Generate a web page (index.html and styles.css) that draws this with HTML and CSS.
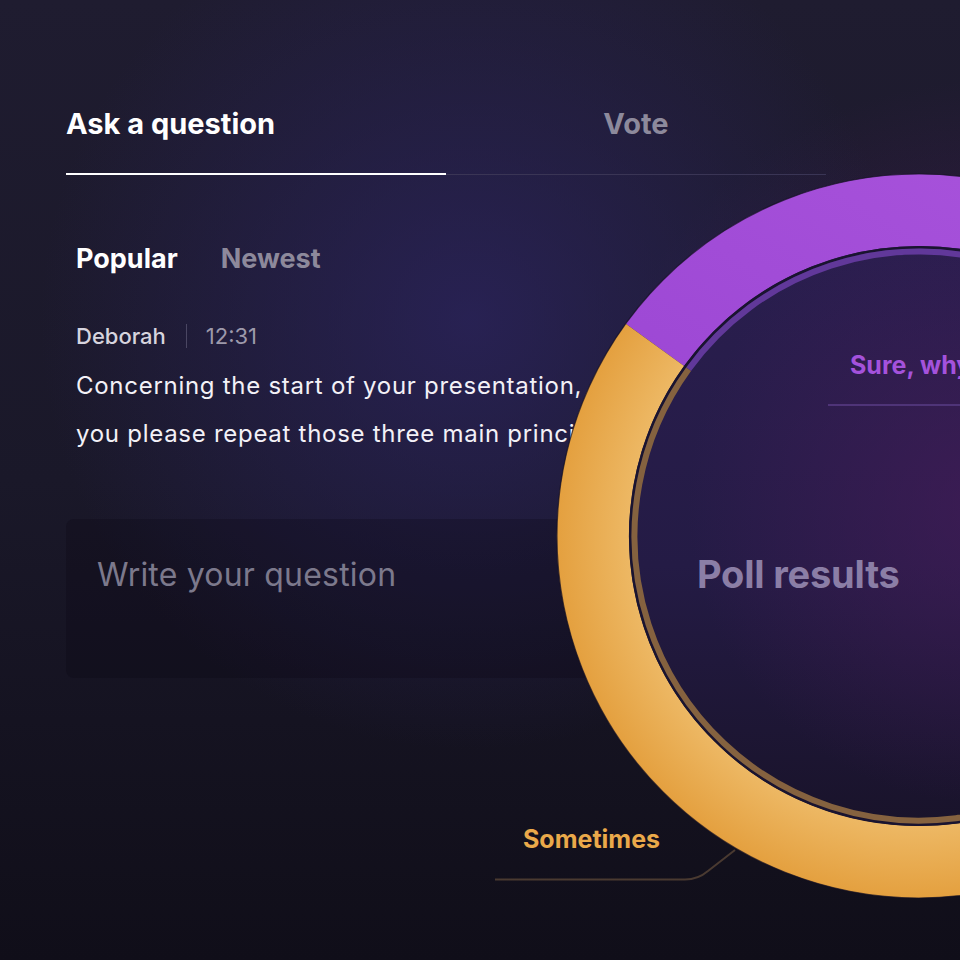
FILE: index.html
```html
<!DOCTYPE html>
<html lang="en">
<head>
  <meta charset="UTF-8" />
  <meta name="viewport" content="width=device-width, initial-scale=1.0"/>
  <title>Q&amp;A - Poll results</title>
  <link rel="stylesheet" href="styles.css">
</head>
<body>
  <main class="panel">
    <nav class="tabs">
      <a href="#" class="tab active">Ask a question</a>
      <a href="#" class="tab">Vote</a>
    </nav>

    <div class="sort">
      <span class="sort-item active">Popular</span>
      <span class="sort-item">Newest</span>
    </div>

    <article class="question">
      <div class="meta">
        <span class="author">Deborah</span>
        <span class="time">12:31</span>
      </div>
      <p class="question-text">Concerning the start of your presentation, could<br>you please repeat those three main principles?</p>
    </article>

    <div class="ask-box">
      <span class="placeholder">Write your question</span>
    </div>
  </main>

  <section class="poll">
    <svg class="ring" viewBox="0 0 724 724" width="724" height="724">
      <defs>
        <radialGradient id="gOrange" cx="362" cy="362" r="362" gradientUnits="userSpaceOnUse">
          <stop offset="0.8" stop-color="#edb864"/>
          <stop offset="1" stop-color="#e4a03f"/>
        </radialGradient>
        <linearGradient id="gPurple" x1="0" y1="1" x2="1" y2="0">
          <stop offset="0" stop-color="#9944d2"/>
          <stop offset="1" stop-color="#a954dc"/>
        </linearGradient>
        <linearGradient id="gDisk" x1="0" y1="0" x2="0" y2="1">
          <stop offset="0" stop-color="#2a1e4f"/>
          <stop offset="0.55" stop-color="#241b45"/>
          <stop offset="1" stop-color="#19132a"/>
        </linearGradient>
        <radialGradient id="gGlow" cx="430" cy="330" r="300" gradientUnits="userSpaceOnUse">
          <stop offset="0" stop-color="#4a1c5c" stop-opacity="0.6"/>
          <stop offset="1" stop-color="#4a1c5c" stop-opacity="0"/>
        </radialGradient>
      </defs>
      <!-- connector for the "Sometimes" label -->
      <path d="M-62 705.5 H128 Q141 705.5 151 697 L178 676" fill="none" stroke="#4a3a31" stroke-width="2"/>

      <circle cx="362" cy="362" r="290" fill="url(#gDisk)"/>
      <circle cx="362" cy="362" r="290" fill="url(#gGlow)"/>

      <path d="M97.9 170.8 A326 326 0 0 1 688 362" fill="none" stroke="url(#gPurple)" stroke-width="72"/>
      <path d="M688 362 A326 326 0 1 1 97.9 170.8" fill="none" stroke="url(#gOrange)" stroke-width="72"/>
      <circle cx="362" cy="362" r="362" fill="none" stroke="#140f22" stroke-opacity="0.7" stroke-width="1.2"/>

      <circle cx="362" cy="362" r="288.7" fill="none" stroke="#1a1430" stroke-width="2.6"/>
      <path d="M131.6 195.2 A284.5 284.5 0 0 1 646.5 362" fill="none" stroke="#61389a" stroke-width="6"/>
      <path d="M646.5 362 A284.5 284.5 0 1 1 131.6 195.2" fill="none" stroke="#85623f" stroke-width="6"/>
    </svg>

    <h2 class="poll-title">Poll results</h2>
    <span class="poll-label sure">Sure, why not</span>
    <span class="poll-label sometimes">Sometimes</span>
  </section>
</body>
</html>
```

FILE: styles.css
```css
* {
  margin: 0;
  padding: 0;
  box-sizing: border-box;
  font-family: 'Inter', 'Liberation Sans', sans-serif;
}

body {
  width: 960px;
  height: 960px;
  overflow: hidden;
  position: relative;
  color: #f3f1f7;
  background:
    radial-gradient(circle 430px at 470px 320px, rgba(44, 36, 96, 0.75), rgba(44, 36, 96, 0)),
    radial-gradient(circle 400px at 990px 480px, rgba(74, 28, 92, 0.7), rgba(74, 28, 92, 0)),
    linear-gradient(180deg, #1f1c30 0%, #1a1829 50%, #100e19 100%);
}

.panel {
  width: 760px;
  margin-left: 66px;
  padding-top: 106px;
}

/* main tabs */
.tabs {
  display: grid;
  grid-template-columns: 1fr 1fr;
}

.tab {
  font-size: 29px;
  font-weight: 700;
  line-height: 36px;
  padding-bottom: 31px;
  color: #8d8a9c;
  text-align: center;
  text-decoration: none;
  border-bottom: 1px solid #3a3555;
}

.tab.active {
  color: #fff;
  text-align: left;
  border-bottom: 2px solid #fff;
}

/* sort switch */
.sort {
  display: flex;
  gap: 43px;
  padding-left: 10px;
  margin-top: 67px;
}

.sort-item {
  font-size: 27px;
  font-weight: 700;
  line-height: 34px;
  color: #8d899b;
}

.sort-item.active {
  color: #fff;
}

/* question card */
.question {
  padding-left: 10px;
  margin-top: 46px;
}

.meta {
  display: flex;
  align-items: center;
  font-size: 22px;
  line-height: 28px;
}

.author {
  font-weight: 500;
  color: #d6d4de;
  padding-right: 20px;
}

.time {
  color: #9d99ab;
  padding-left: 19px;
  border-left: 1px solid #4a4662;
  line-height: 24px;
}

.question-text {
  margin-top: 12px;
  font-size: 24px;
  line-height: 48px;
  letter-spacing: 0.72px;
  color: #f3f1f7;
  white-space: nowrap;
}

.ask-box {
  margin-top: 61px;
  height: 159px;
  border-radius: 8px;
  background: rgba(8, 6, 18, 0.24);
  padding: 36px 31px;
}

.placeholder {
  display: block;
  font-size: 32px;
  line-height: 40px;
  letter-spacing: 0.2px;
  color: #7c798c;
}

/* poll donut, laid over the question panel */
.poll {
  position: absolute;
  left: 557px;
  top: 174px;
  width: 724px;
  height: 724px;
}

.ring {
  display: block;
  overflow: visible;
}

.poll-title {
  position: absolute;
  left: 140px;
  top: 377px;
  font-size: 38px;
  font-weight: 700;
  line-height: 46px;
  letter-spacing: -0.2px;
  color: #8b7ea6;
  white-space: nowrap;
}

.poll-label {
  position: absolute;
  font-size: 25px;
  font-weight: 700;
  line-height: 30px;
  white-space: nowrap;
}

.poll-label.sure {
  left: 271px;
  top: 176px;
  padding-left: 22px;
  padding-bottom: 24px;
  width: 260px;
  color: #a452dc;
  border-bottom: 2px solid #4f3478;
}

.poll-label.sometimes {
  left: -34px;
  top: 650px;
  color: #eaa94a;
}
```
